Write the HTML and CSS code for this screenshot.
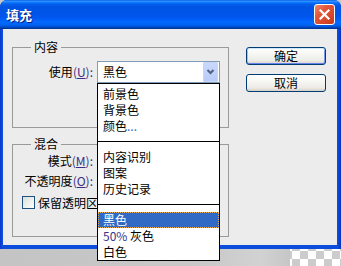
FILE: index.html
```html
<!DOCTYPE html>
<html lang="zh-CN">
<head>
<meta charset="utf-8">
<title>填充</title>
<link rel="stylesheet" href="styles.css">
</head>
<body>
<div class="window">
  <div class="titlebar">
    <span class="title">填充</span>
    <button class="close" aria-label="关闭">
      <svg width="13" height="13" viewBox="0 0 13 13"><path d="M2.5 2.5 L10.5 10.5 M10.5 2.5 L2.5 10.5" stroke="#fff" stroke-width="2.2" stroke-linecap="square"/></svg>
    </button>
  </div>
  <div class="client">
    <div class="groups">
      <fieldset class="group group-content">
        <legend>内容</legend>
        <div class="row row-use">
          <label class="lbl">使用<span class="acc">(<u>U</u>):</span></label>
          <div class="combo">
            <div class="select">
              <span class="value">黑色</span>
              <span class="arrow"><svg width="15" height="20" viewBox="0 0 15 20"><path d="M4.5 8 L7.5 11 L10.5 8" fill="none" stroke="#4d6185" stroke-width="2"/></svg></span>
            </div>
            <ul class="list">
              <li>前景色</li>
              <li>背景色</li>
              <li>颜色<span class="dots">...</span></li>
              <li class="sep"></li>
              <li>内容识别</li>
              <li>图案</li>
              <li>历史记录</li>
              <li class="sep"></li>
              <li class="selected">黑色</li>
              <li><span class="num">50%</span> 灰色</li>
              <li>白色</li>
            </ul>
          </div>
        </div>
      </fieldset>
      <fieldset class="group group-blend">
        <legend>混合</legend>
        <div class="row row-mode">
          <label class="lbl">模式<span class="acc">(<u>M</u>):</span></label>
          <div class="field"></div>
        </div>
        <div class="row row-opacity">
          <label class="lbl">不透明度<span class="acc">(<u>O</u>):</span></label>
          <div class="field"></div>
        </div>
        <label class="check"><span class="box"></span>保留透明区域</label>
      </fieldset>
    </div>
    <div class="buttons">
      <button class="btn default">确定</button>
      <button class="btn">取消</button>
    </div>
  </div>
</div>
<div class="ground">
  <div class="grey"></div>
  <div class="checker"></div>
</div>
</body>
</html>
```
FILE: styles.css
```css
* { box-sizing: border-box; }
html, body { margin: 0; padding: 0; }
body {
  width: 341px;
  height: 266px;
  overflow: hidden;
  background: #c9c9c9;
  font-family: "Noto Sans CJK SC", "Noto Sans", sans-serif;
  font-size: 12px;
  color: #000;
}

.window {
  width: 341px;
  height: 249px;
  display: flex;
  flex-direction: column;
  background: linear-gradient(to right, #0a36c8 0, #0b4ddc 2px, #0b4ddc 338px, #0532c4 341px);
  border-radius: 7px 7px 0 0;
}

.titlebar {
  height: 29px;
  flex: none;
  display: flex;
  align-items: center;
  justify-content: space-between;
  padding: 0 6px;
  border-radius: 7px 7px 0 0;
  background: linear-gradient(to bottom, #0058ee 0%, #3593ff 4%, #288eff 6%, #127dff 8%, #036ffc 10%, #0262ee 14%, #0057e5 20%, #0054e3 24%, #0055eb 56%, #005bf5 66%, #026afe 76%, #0062ef 86%, #0052d6 92%, #0040ab 96%, #003092 100%);
}
.title {
  color: #fff;
  font-weight: bold;
  font-size: 13px;
  line-height: 16px;
  text-shadow: 1px 1px 0 #0a1e80;
}
.close {
  width: 21px;
  height: 21px;
  padding: 0;
  border: 1px solid #fff;
  border-radius: 3px;
  background: linear-gradient(135deg, #f08a6c 0%, #e2583a 35%, #d7452a 70%, #c2391c 100%);
  display: flex;
  align-items: center;
  justify-content: center;
}

.client {
  flex: 1;
  margin: 0 4px 4px 3px;
  background: #ececec;
  padding: 11px 11px 0 9px;
  display: flex;
  gap: 17px;
}

.groups {
  width: 217px;
  display: flex;
  flex-direction: column;
  gap: 9px;
}

.group {
  margin: 0;
  padding: 0;
  min-width: 0;
  border: 1px solid #9a9a9a;
}
.group legend {
  margin-left: 18px;
  padding: 0 3px;
  line-height: 14px;
  font-size: 12px;
}
.group-content { padding-bottom: 44px; }
.group-blend { padding-bottom: 27px; }

.row {
  display: grid;
  grid-template-columns: 80px 123px;
  column-gap: 4px;
  align-items: center;
}
.row-use { padding-top: 7px; height: 29px; }
.row-mode { height: 20px; }
.row-opacity { height: 19px; }

.lbl {
  text-align: right;
  white-space: nowrap;
  line-height: 16px;
}
.acc { color: #3a2e88; }

.combo { position: relative; }
.select {
  width: 123px;
  height: 22px;
  border: 1px solid #7f9db9;
  background: #fff;
  display: flex;
  align-items: center;
  padding-left: 5px;
}
.select .value { line-height: 16px; }
.arrow {
  margin-left: auto;
  margin-right: 1px;
  width: 15px;
  height: 20px;
  display: flex;
  background: linear-gradient(to bottom, #c9d8fd, #b9cbf8);
  border: 1px solid #c8d6f6;
  border-radius: 1px;
}
.arrow svg { display: block; margin: -1px; }

.list {
  position: absolute;
  left: 0;
  top: 22px;
  z-index: 5;
  width: 123px;
  margin: 0;
  padding: 2px 0 0;
  list-style: none;
  background: #fff;
  border: 1px solid #000;
}
.list li {
  height: 16px;
  line-height: 16px;
  padding-left: 5px;
  white-space: nowrap;
}
.list li.sep {
  height: 15px;
  padding: 0;
  display: flex;
  align-items: center;
}
.list li.sep::before {
  content: "";
  flex: 1;
  height: 1px;
  background: #000;
}
.list li.selected {
  background: #316ac5;
  color: #fff;
  outline: 1px dotted #f0b050;
  outline-offset: -1px;
}
.dots { color: #2f6fd0; }
.num { color: #3a3488; }

.field {
  width: 60px;
  height: 18px;
  border: 1px solid #7f9db9;
  background: #fff;
}

.check {
  display: flex;
  align-items: center;
  gap: 3px;
  margin: 6px 0 0 9px;
  height: 13px;
  line-height: 16px;
  white-space: nowrap;
}
.box {
  width: 13px;
  height: 13px;
  flex: none;
  border: 1px solid #1c5180;
  background: linear-gradient(135deg, #dcdcd7, #ffffff);
}

.buttons {
  width: 80px;
  padding-top: 7px;
  display: flex;
  flex-direction: column;
  gap: 9px;
}
.btn {
  width: 80px;
  height: 18px;
  padding: 0;
  font-family: inherit;
  font-size: 12px;
  line-height: 16px;
  color: #000;
  border: 1px solid #003c74;
  border-radius: 3px;
  background: linear-gradient(to bottom, #ffffff 0%, #f6f6f3 40%, #ecebe6 80%, #d6d0c5 100%);
}
.btn.default {
  box-shadow: inset 0 1px 0 #cee7ff, inset 0 -1px 0 #6982ee, inset 1px 0 0 #a6c0f6, inset -1px 0 0 #7b97ee;
}

.ground {
  height: 17px;
  display: flex;
}
.grey {
  flex: 1;
  background: linear-gradient(to right, #c4c4c4 0, #c8c8c8 200px, #d2d2d2 260px, #c6c6c6 290px);
}
.checker {
  width: 51px;
  background-color: #ffffff;
  background-image: conic-gradient(#cccccc 25%, transparent 0 50%, #cccccc 0 75%, transparent 0);
  background-size: 16px 16px;
  background-position: 2px 2px;
}
```
